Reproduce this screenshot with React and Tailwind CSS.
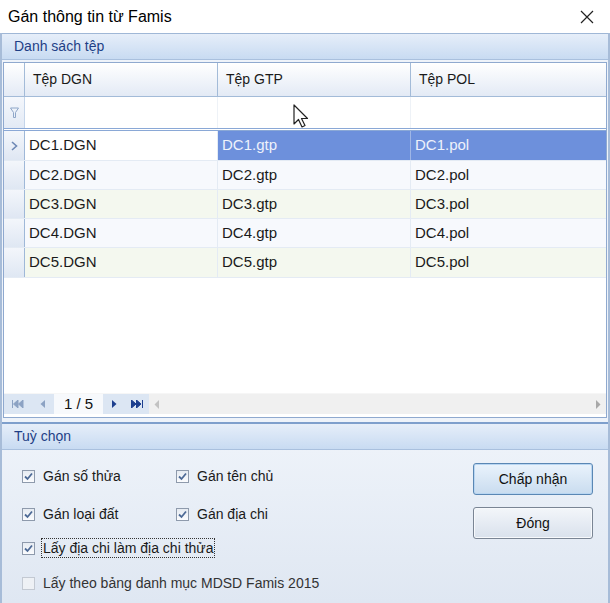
import React from "react";

const rows = [
  { dgn: "DC1.DGN", gtp: "DC1.gtp", pol: "DC1.pol", bg: "bg-white", h: "h-[30px]", sel: true },
  { dgn: "DC2.DGN", gtp: "DC2.gtp", pol: "DC2.pol", bg: "bg-[#f7f9fd]", h: "h-[29px]" },
  { dgn: "DC3.DGN", gtp: "DC3.gtp", pol: "DC3.pol", bg: "bg-[#f4f8ef]", h: "h-[29px]" },
  { dgn: "DC4.DGN", gtp: "DC4.gtp", pol: "DC4.pol", bg: "bg-[#f7f9fd]", h: "h-[29px]" },
  { dgn: "DC5.DGN", gtp: "DC5.gtp", pol: "DC5.pol", bg: "bg-[#f4f8ef]", h: "h-[30px]" },
];

function Check({ checked, disabled }) {
  return (
    <span
      className={
        "w-[13px] h-[13px] border flex items-center justify-center shrink-0 " +
        (disabled
          ? "border-[#c3c9d2] bg-[#eef1f5]"
          : "border-[#8e9aac] bg-linear-to-b from-[#e6ebf2] to-[#fbfcfe]")
      }
    >
      {checked && (
        <svg width="9" height="9" viewBox="0 0 9 9">
          <path d="M1 4.5 L3.5 7 L8 1.5" fill="none" stroke="#4d6a96" strokeWidth="1.8" />
        </svg>
      )}
    </span>
  );
}

function Option({ label, checked, disabled, focus, className = "" }) {
  return (
    <div className={"flex items-center gap-[8px] " + className}>
      <Check checked={checked} disabled={disabled} />
      <span
        className={
          "leading-[18px] " +
          (focus ? "border border-dotted border-[#333] px-[1px] -ml-[2px]" : "") +
          (disabled ? " text-[#333]" : "")
        }
      >
        {label}
      </span>
    </div>
  );
}

function SectionHeader({ children }) {
  return (
    <div className="h-[26px] flex items-center px-[12px] bg-linear-to-b from-[#e6eef9] to-[#c8dbf2] border-b border-[#a9c0de] text-[#1f3f86] text-[14px]">
      {children}
    </div>
  );
}

export default function App() {
  return (
    <div
      className="w-[610px] h-[603px] overflow-hidden bg-white flex flex-col text-[14px] text-[#1a1a1a] relative"
      style={{ fontFamily: '"Liberation Sans", "DejaVu Sans", sans-serif' }}
    >
      {/* title bar */}
      <div className="h-[33px] shrink-0 flex items-center justify-between pl-[8px] pr-[16px]">
        <span className="text-[16px] text-black">Gán thông tin từ Famis</span>
        <svg width="14" height="14" viewBox="0 0 14 14">
          <path d="M1 1 L13 13 M13 1 L1 13" stroke="#222" strokeWidth="1.2" />
        </svg>
      </div>

      <div className="flex-1 flex flex-col border-l-[2px] border-r-[2px] border-[#a7bcd8] bg-[#eef3fa]">
        {/* Danh sách tệp */}
        <div className="border-t border-[#9fb7d6]">
          <SectionHeader>Danh sách tệp</SectionHeader>
        </div>
        <div className="mt-[2px] mx-[1px] border border-[#8fa9cf] bg-white flex flex-col h-[356px]">
          {/* header */}
          <div className="flex h-[34px] bg-linear-to-b from-white to-[#e3eaf5] border-b border-[#a3bbd8]">
            <div className="w-[21px] border-r border-[#a3bbd8]" />
            <div className="w-[193px] border-r border-[#a3bbd8] flex items-center pl-[8px]">Tệp DGN</div>
            <div className="w-[193px] border-r border-[#a3bbd8] flex items-center pl-[8px]">Tệp GTP</div>
            <div className="flex-1 flex items-center pl-[8px]">Tệp POL</div>
          </div>
          {/* filter row */}
          <div className="flex h-[34px] border-b-[3px] border-double border-[#8aa8d6]">
            <div className="w-[21px] border-r border-[#c5d5ea] bg-linear-to-b from-[#f4f7fc] to-[#e3eaf5] flex items-center justify-center">
              <svg width="9" height="12" viewBox="0 0 9 12">
                <path d="M0.5 1 H8.5 L5.5 5.5 V10.5 H3.5 V5.5 Z" fill="none" stroke="#8ea6c8" strokeWidth="1" />
              </svg>
            </div>
            <div className="w-[193px] border-r border-[#eef2f7]" />
            <div className="w-[193px] border-r border-[#eef2f7]" />
            <div className="flex-1" />
          </div>
          {/* rows */}
          {rows.map((r) => (
            <div key={r.dgn} className={"flex border-b border-[#e4ebf4] text-[15px] " + r.h + " " + r.bg}>
              <div className="w-[21px] border-r border-[#9fb8d8] bg-linear-to-b from-[#f3f6fb] to-[#dfe7f3] flex items-center justify-center">
                {r.sel && (
                  <svg width="7" height="10" viewBox="0 0 7 10">
                    <path d="M1 1 L5.5 5 L1 9" fill="none" stroke="#6d88b5" strokeWidth="1.6" />
                  </svg>
                )}
              </div>
              <div className="w-[193px] border-r border-[#e4ebf4] flex items-center pl-[4px]">{r.dgn}</div>
              <div
                className={
                  "w-[193px] border-r flex items-center pl-[4px] " +
                  (r.sel ? "bg-[#6d90dc] text-[#eef2fb] border-[#9fb6e6]" : "border-[#e4ebf4]")
                }
              >
                {r.gtp}
              </div>
              <div
                className={
                  "flex-1 flex items-center pl-[4px] " + (r.sel ? "bg-[#6d90dc] text-[#eef2fb]" : "")
                }
              >
                {r.pol}
              </div>
            </div>
          ))}
          <div className="flex-1" />
          {/* navigator */}
          <div className="h-[21px] mb-[3px] flex items-center bg-[#f0f0f0] border-t border-[#f6f6f6]">
            <div className="flex items-center h-full bg-[#dce6f3]">
              <span className="w-[28px] flex justify-center">
                <svg width="12" height="8" viewBox="0 0 12 8">
                  <path d="M0.5 0 V8 M6 0 L1.5 4 L6 8 Z M11 0 L6.5 4 L11 8 Z" fill="#8ca2c3" stroke="#8ca2c3" strokeWidth="1" />
                </svg>
              </span>
              <span className="w-[22px] flex justify-center">
                <svg width="6" height="8" viewBox="0 0 6 8">
                  <path d="M5 0 L0.5 4 L5 8 Z" fill="#8ca2c3" />
                </svg>
              </span>
            </div>
            <div className="h-full flex items-center px-[10px] bg-[#f7f9fc] text-[15px] text-[#111]">1 / 5</div>
            <div className="flex items-center h-full bg-[#dce6f3]">
              <span className="w-[22px] flex justify-center">
                <svg width="6" height="8" viewBox="0 0 6 8">
                  <path d="M1 0 L5.5 4 L1 8 Z" fill="#1d3f8f" />
                </svg>
              </span>
              <span className="w-[24px] flex justify-center">
                <svg width="12" height="8" viewBox="0 0 12 8">
                  <path d="M0.5 0 L5 4 L0.5 8 Z M5.5 0 L10 4 L5.5 8 Z M11.5 0 V8" fill="#1d3f8f" stroke="#1d3f8f" strokeWidth="1" />
                </svg>
              </span>
            </div>
            <span className="w-[16px] flex justify-center">
              <svg width="6" height="9" viewBox="0 0 6 9">
                <path d="M5 0 L0.5 4.5 L5 9 Z" fill="#c2c2c2" />
              </svg>
            </span>
            <div className="flex-1" />
            <span className="w-[16px] flex justify-center">
              <svg width="6" height="9" viewBox="0 0 6 9">
                <path d="M1 0 L5.5 4.5 L1 9 Z" fill="#a8a8a8" />
              </svg>
            </span>
          </div>
        </div>

        {/* Tuỳ chọn */}
        <div className="mt-[4px] border-t-[2px] border-[#7e9fcc]">
          <SectionHeader>Tuỳ chọn</SectionHeader>
        </div>
        <div className="flex-1 flex bg-linear-to-b from-[#edf2f9] to-[#dfe7f2] pl-[20px] pr-[15px]">
          <div className="flex-1 flex flex-col pt-[17px]">
            <div className="flex">
              <Option label="Gán số thửa" checked className="w-[154px]" />
              <Option label="Gán tên chủ" checked />
            </div>
            <div className="flex mt-[20px]">
              <Option label="Gán loại đất" checked className="w-[154px]" />
              <Option label="Gán địa chi" checked />
            </div>
            <Option label="Lấy địa chi làm địa chi thửa" checked focus className="mt-[15px]" />
            <Option label="Lấy theo bảng danh mục MDSD Famis 2015" disabled className="mt-[16px]" />
          </div>
          <div className="w-[120px] flex flex-col pt-[13px] gap-[12px]">
            <button className="h-[32px] rounded-[3px] border border-[#5a87b4] bg-linear-to-b from-[#eaf3fc] to-[#c9dcef] shadow-[inset_0_0_0_1px_#b9d6f2] text-[#111]">
              Chấp nhận
            </button>
            <button className="h-[32px] rounded-[3px] border border-[#7a8594] bg-linear-to-b from-[#f3f6fa] to-[#d9e1ec] shadow-[inset_0_0_0_1px_#f7f9fc] text-[#111]">
              Đóng
            </button>
          </div>
        </div>
      </div>

      {/* mouse cursor */}
      <svg className="absolute left-[293px] top-[104px]" width="18" height="28" viewBox="0 0 18 28">
        <path d="M1 1 L1 20 L5.5 15.5 L9 23 L12 21.5 L8.5 14.5 L14.5 14.5 Z" fill="white" stroke="#222" strokeWidth="1.2" strokeLinejoin="round" />
      </svg>
    </div>
  );
}
